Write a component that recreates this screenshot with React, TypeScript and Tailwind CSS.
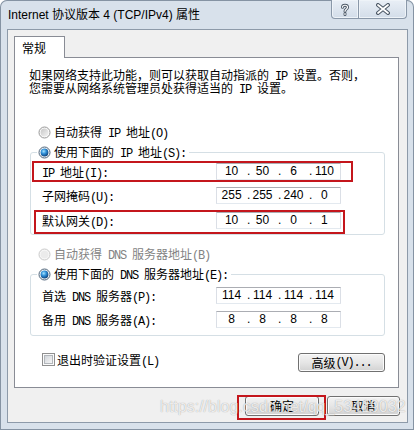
import React from "react";

const M = ({ children }: { children: React.ReactNode }) => (
  <span className="font-['Liberation_Mono',monospace] tracking-[-1.2px] leading-[0px]">{children}</span>
);

const Radio = ({ checked, disabled }: { checked?: boolean; disabled?: boolean }) => (
  <svg width="13" height="13" viewBox="0 0 13 13" className="shrink-0">
    <defs>
      <linearGradient id="rg-off" x1="0" y1="0" x2="1" y2="1">
        <stop offset="0" stopColor="#c6c6c6" />
        <stop offset="1" stopColor="#f4f4f4" />
      </linearGradient>
      <radialGradient id="rg-on" cx="0.4" cy="0.35" r="0.7">
        <stop offset="0" stopColor="#a6e4ff" />
        <stop offset="0.45" stopColor="#2f8fd8" />
        <stop offset="1" stopColor="#0c3b73" />
      </radialGradient>
    </defs>
    {disabled ? (
      <>
        <circle cx="6.5" cy="6.5" r="5.5" fill="#f6f6f6" stroke="#c9c9c9" />
        <circle cx="6.5" cy="6.5" r="3.8" fill="#ebebeb" />
      </>
    ) : checked ? (
      <>
        <circle cx="6.5" cy="6.5" r="5.5" fill="#f8f8f8" stroke="#4d6379" />
        <circle cx="6.5" cy="6.5" r="3.9" fill="url(#rg-on)" />
      </>
    ) : (
      <>
        <circle cx="6.5" cy="6.5" r="5.5" fill="#fbfbfb" stroke="#979797" />
        <circle cx="6.5" cy="6.5" r="3.9" fill="url(#rg-off)" />
      </>
    )}
  </svg>
);

const Check = () => (
  <svg width="13" height="13" viewBox="0 0 13 13" className="shrink-0">
    <defs>
      <linearGradient id="cb" x1="0" y1="0" x2="1" y2="1">
        <stop offset="0" stopColor="#cfd3d8" />
        <stop offset="1" stopColor="#f8f8f8" />
      </linearGradient>
    </defs>
    <rect x="0.5" y="0.5" width="12" height="12" fill="#fbfbfb" stroke="#8f8f8f" />
    <rect x="2.5" y="2.5" width="8" height="8" fill="url(#cb)" stroke="#b2b6bb" />
  </svg>
);

const IpBox = ({ v }: { v: string[] }) => (
  <div className="w-[125px] h-[17px] border border-[#abadb3] border-l-[#dbdfe6] border-r-[#dbdfe6] border-b-[#e3e9ef] bg-white flex items-center pl-[3px] font-['Liberation_Sans',sans-serif] text-[12px] leading-[15px] text-black">
    {v.map((n, i) => (
      <React.Fragment key={i}>
        <span className="w-[28px] pr-[4px] text-center">{n}</span>
        {i < 3 && <span className="w-[4px]">.</span>}
      </React.Fragment>
    ))}
  </div>
);

const Row = ({ label, v, className = "" }: { label: React.ReactNode; v: string[]; className?: string }) => (
  <div className={`flex items-center ml-[11px] h-[17px] ${className}`}>
    <div className="w-[174px] leading-[16px]">{label}</div>
    <IpBox v={v} />
  </div>
);

const Btn = ({ children, className = "" }: { children: React.ReactNode; className?: string }) => (
  <div
    className={`flex items-center justify-center rounded-[3px] border border-[#707070] bg-linear-to-b from-[#f3f3f3] via-[#e6e6e6] to-[#d2d2d2] shadow-[inset_0_0_0_1px_#fbfbfb] leading-[16px] ${className}`}
  >
    {children}
  </div>
);

export default function App() {
  return (
    <div className="relative w-[414px] h-[430px] overflow-hidden rounded-t-[7px] bg-[#d8e1eb] shadow-[inset_0_0_0_1px_#8593a3] font-['Noto_Sans_CJK_SC',sans-serif] text-[12px] text-black">
      {/* Title bar */}
      <div className="h-[29px] flex justify-between items-start">
        <div className="pl-[8px] pt-[7px] leading-[16px] font-['Liberation_Sans','Noto_Sans_CJK_SC',sans-serif] text-[12px] text-black">
          Internet 协议版本 4 (TCP/IPv4) 属性
        </div>
        <div className="flex mr-[7px] h-[19px]">
          <div className="w-[28px] h-full flex items-center justify-center border border-t-0 border-[#8a98a9] rounded-bl-[4px] bg-linear-to-b from-[#e9eff6] to-[#d3dde9] shadow-[inset_0_0_0_1px_#eef3f8]">
            <svg width="10" height="13" viewBox="0 0 10 13">
              <path d="M2.5 4.2 C2.5 1.6 7.5 1.6 7.5 4.2 C7.5 6.2 5 6.2 5 8.2 M5 10.6 V11.4" fill="none" stroke="#4e5a68" strokeWidth="3" strokeLinecap="round" />
              <path d="M2.5 4.2 C2.5 1.6 7.5 1.6 7.5 4.2 C7.5 6.2 5 6.2 5 8.2 M5 10.6 V11.4" fill="none" stroke="#ffffff" strokeWidth="1.2" strokeLinecap="round" />
            </svg>
          </div>
          <div className="w-[48px] h-full flex items-center justify-center border border-t-0 border-l-0 border-[#8a98a9] rounded-br-[4px] bg-linear-to-b from-[#e9eff6] to-[#d3dde9] shadow-[inset_0_0_0_1px_#eef3f8]">
            <svg width="16" height="12" viewBox="0 0 16 12">
              <path d="M3 2 L13 10 M13 2 L3 10" fill="none" stroke="#4e5a68" strokeWidth="4" strokeLinecap="round" />
              <path d="M3 2 L13 10 M13 2 L3 10" fill="none" stroke="#ffffff" strokeWidth="1.8" strokeLinecap="round" />
            </svg>
          </div>
        </div>
      </div>

      {/* Client area */}
      <div className="ml-[7px] w-[401px] h-[394px] border border-[#8d9aa9] bg-[#f0f0f0] flex flex-col">
        {/* Tab */}
        <div className="mt-[6px] ml-[6px] w-[51px] h-[22px] -mb-px relative z-10 border border-b-0 border-[#898c95] bg-white pl-[7px] pt-[3px] leading-[16px]">
          常规
        </div>
        {/* Panel */}
        <div className="ml-[6px] w-[385px] h-[331px] border border-[#898c95] bg-white flex flex-col">
          <div className="pl-[14px] pt-[10px] leading-[13px]">
            <div className="h-[13px] whitespace-nowrap">
              如果网络支持此功能，则可以获取自动指派的<M> IP </M>设置。否则，
            </div>
            <div className="h-[13px] whitespace-nowrap">
              您需要从网络系统管理员处获得适当的<M> IP </M>设置。
            </div>
          </div>

          <div className="mt-[30px] ml-[23px] h-[16px] flex items-center gap-[3px] leading-[16px]">
            <Radio />
            <span>
              自动获得<M> IP </M>地址<M>(O)</M>
            </span>
          </div>

          <div className="mt-[12px] ml-[15px] w-[355px] border border-[#d5dfe5] rounded-[3px] pb-[5px] flex flex-col">
            <div className="-mt-[9px] ml-[6px] self-start h-[16px] flex items-center gap-[3px] bg-white pl-[1px] pr-[3px] leading-[16px]">
              <Radio checked />
              <span>
                使用下面的<M> IP </M>地址<M>(S):</M>
              </span>
            </div>
            <Row
              className="mt-[3px]"
              label={
                <>
                  <M>IP </M>地址<M>(I):</M>
                </>
              }
              v={["10", "50", "6", "110"]}
            />
            <Row
              className="mt-[7px]"
              label={
                <>
                  子网掩码<M>(U):</M>
                </>
              }
              v={["255", "255", "240", "0"]}
            />
            <Row
              className="mt-[8px]"
              label={
                <>
                  默认网关<M>(D):</M>
                </>
              }
              v={["10", "50", "0", "1"]}
            />
          </div>

          <div className="mt-[11px] ml-[23px] h-[16px] flex items-center gap-[3px] leading-[16px] text-[#838383]">
            <Radio disabled />
            <span>
              自动获得<M> DNS </M>服务器地址<M>(B)</M>
            </span>
          </div>

          <div className="mt-[12px] ml-[15px] w-[355px] border border-[#d5dfe5] rounded-[3px] pb-[7px] flex flex-col">
            <div className="-mt-[9px] ml-[6px] self-start h-[16px] flex items-center gap-[3px] bg-white pl-[1px] pr-[3px] leading-[16px]">
              <Radio checked />
              <span>
                使用下面的<M> DNS </M>服务器地址<M>(E):</M>
              </span>
            </div>
            <Row
              className="mt-[5px]"
              label={
                <>
                  首选<M> DNS </M>服务器<M>(P):</M>
                </>
              }
              v={["114", "114", "114", "114"]}
            />
            <Row
              className="mt-[7px]"
              label={
                <>
                  备用<M> DNS </M>服务器<M>(A):</M>
                </>
              }
              v={["8", "8", "8", "8"]}
            />
          </div>

          <div className="mt-[17px] ml-[27px] mr-[13px] flex justify-between items-start">
            <div className="h-[13px] flex items-center gap-[2px] leading-[16px]">
              <Check />
              <span>
                退出时验证设置<M>(L)</M>
              </span>
            </div>
            <Btn className="w-[87px] h-[19px]">
              高级<M>(V)...</M>
            </Btn>
          </div>
        </div>

        <div className="mt-[8px] pr-[7px] flex justify-end gap-[8px]">
          <Btn className="w-[74px] h-[20px]">确定</Btn>
          <Btn className="w-[73px] h-[20px]">取消</Btn>
        </div>
      </div>

      {/* Annotations */}
      <div className="absolute left-[32px] top-[161px] w-[321px] h-[21px] border-2 border-[#c4161c] pointer-events-none" />
      <div className="absolute left-[34px] top-[210px] w-[311px] h-[24px] border-2 border-[#c4161c] pointer-events-none" />
      <div className="absolute left-[237px] top-[395px] w-[89px] h-[25px] border-2 border-[#c4161c] pointer-events-none" />
      <div className="absolute left-[160px] top-[398px] text-[16px] leading-[18px] font-['Liberation_Sans',sans-serif] text-white/80 [text-shadow:0_0_1px_rgba(0,0,0,0.4)] whitespace-nowrap pointer-events-none">
        https://blog.csdn.net/qq_53419032
      </div>
    </div>
  );
}
